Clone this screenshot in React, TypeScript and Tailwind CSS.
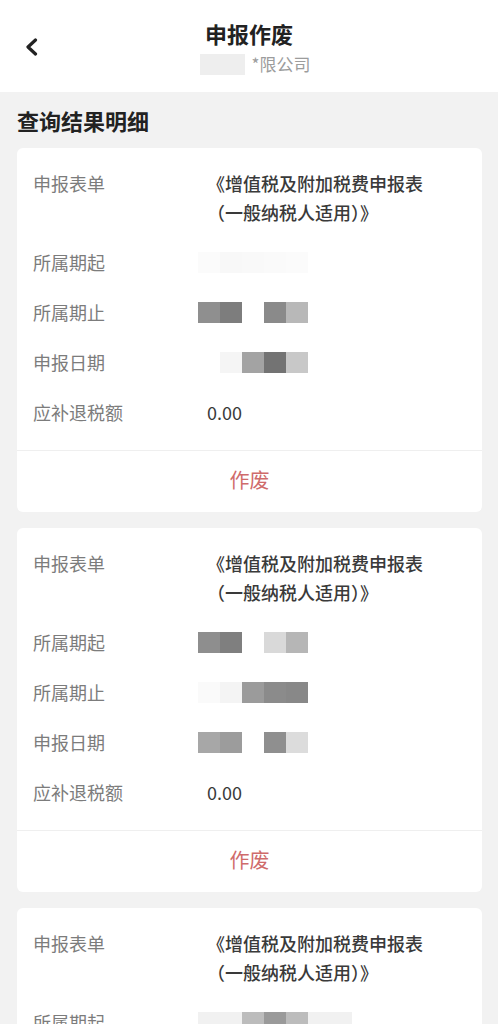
import React from 'react';

type Row = { label: string; cells?: string[]; text?: string };

const form = ['《增值税及附加税费申报表', '（一般纳税人适用）》'];

const cards: Row[][] = [
  [
    { label: '所属期起', cells: ['bg-[#fbfbfb]', 'bg-[#f8f8f8]', 'bg-[#f9f9f9]', 'bg-[#fafafa]', 'bg-[#fbfbfb]'] },
    { label: '所属期止', cells: ['bg-[#8f8f8f]', 'bg-[#7d7d7d]', 'bg-transparent', 'bg-[#8a8a8a]', 'bg-[#b8b8b8]'] },
    { label: '申报日期', cells: ['bg-transparent', 'bg-[#f5f5f5]', 'bg-[#a3a3a3]', 'bg-[#737373]', 'bg-[#c8c8c8]'] },
    { label: '应补退税额', text: '0.00' },
  ],
  [
    { label: '所属期起', cells: ['bg-[#8e8e8e]', 'bg-[#7f7f7f]', 'bg-transparent', 'bg-[#d9d9d9]', 'bg-[#b6b6b6]'] },
    { label: '所属期止', cells: ['bg-[#fafafa]', 'bg-[#f4f4f4]', 'bg-[#9b9b9b]', 'bg-[#8b8b8b]', 'bg-[#888888]'] },
    { label: '申报日期', cells: ['bg-[#a7a7a7]', 'bg-[#9c9c9c]', 'bg-transparent', 'bg-[#8f8f8f]', 'bg-[#dcdcdc]'] },
    { label: '应补退税额', text: '0.00' },
  ],
  [
    { label: '所属期起', cells: ['bg-[#f1f1f1]', 'bg-[#f1f1f1]', 'bg-[#bcbcbc]', 'bg-[#9a9a9a]', 'bg-[#bcbcbc]', 'bg-[#f1f1f1]', 'bg-[#f1f1f1]'] },
    { label: '所属期止', cells: ['bg-[#9a9a9a]', 'bg-[#888888]', 'bg-transparent', 'bg-[#a0a0a0]', 'bg-[#c2c2c2]'] },
    { label: '申报日期', cells: ['bg-transparent', 'bg-[#f2f2f2]', 'bg-[#a8a8a8]', 'bg-[#7c7c7c]', 'bg-[#c8c8c8]'] },
    { label: '应补退税额', text: '0.00' },
  ],
];

const font = { fontFamily: '"Noto Sans CJK SC", "Noto Sans", sans-serif' };

const Label: React.FC<{ children: React.ReactNode }> = ({ children }) => (
  <div className="w-[174px] shrink-0 text-[18px] leading-[29px] text-[#7c7c7c]">{children}</div>
);

const Card: React.FC<{ rows: Row[] }> = ({ rows }) => (
  <div className="ml-[17px] mr-[16px] rounded-[6px] bg-white">
    <div className="flex flex-col gap-[21px] px-4 pt-[21px] pb-[23px]">
      <div className="flex">
        <Label>申报表单</Label>
        <div className="text-[18px] leading-[29px] font-medium text-[#3a3a3a]">
          {form.map((line) => (
            <div key={line} className="whitespace-nowrap">{line}</div>
          ))}
        </div>
      </div>
      {rows.map((row) => (
        <div key={row.label} className="flex">
          <Label>{row.label}</Label>
          {row.cells ? (
            <div className="-ml-[9px] flex items-center">
              {row.cells.map((c, i) => (
                <div key={i} className={`h-[21px] w-[22px] ${c}`} />
              ))}
            </div>
          ) : (
            <div className="text-[18px] leading-[29px] text-[#3a3a3a]">{row.text}</div>
          )}
        </div>
      ))}
    </div>
    <div className="flex h-[62px] items-center justify-center border-t border-[#efefef] pb-[4px] text-[20px] text-[#cf6b6b]">
      作废
    </div>
  </div>
);

export default function App() {
  return (
    <div className="min-h-screen bg-[#f2f2f2] pb-8" style={font}>
      <header className="relative h-[92px] bg-white pt-[18px] text-center">
        <svg className="absolute left-[25px] top-[38px] h-[18px] w-[13px]" viewBox="0 0 13 18" fill="none">
          <path d="M10.5 2 L3 9 L10.5 16" stroke="#222" strokeWidth="3.2" strokeLinecap="round" strokeLinejoin="round" />
        </svg>
        <div className="text-[22px] font-bold leading-[30px] text-[#222]">申报作废</div>
        <div className="mt-[3px] flex items-center justify-center gap-[7px] pl-[12px]">
          <div className="h-[21px] w-[45px] bg-[#eeeeee]" />
          <div className="text-[17px] leading-[26px] text-[#9c9c9c]">*限公司</div>
        </div>
      </header>
      <h2 className="px-[17px] pt-[13px] pb-[13px] text-[22px] font-bold leading-[30px] text-[#222]">查询结果明细</h2>
      <div className="flex flex-col gap-[16px]">
        {cards.map((rows, i) => (
          <Card key={i} rows={rows} />
        ))}
      </div>
    </div>
  );
}
